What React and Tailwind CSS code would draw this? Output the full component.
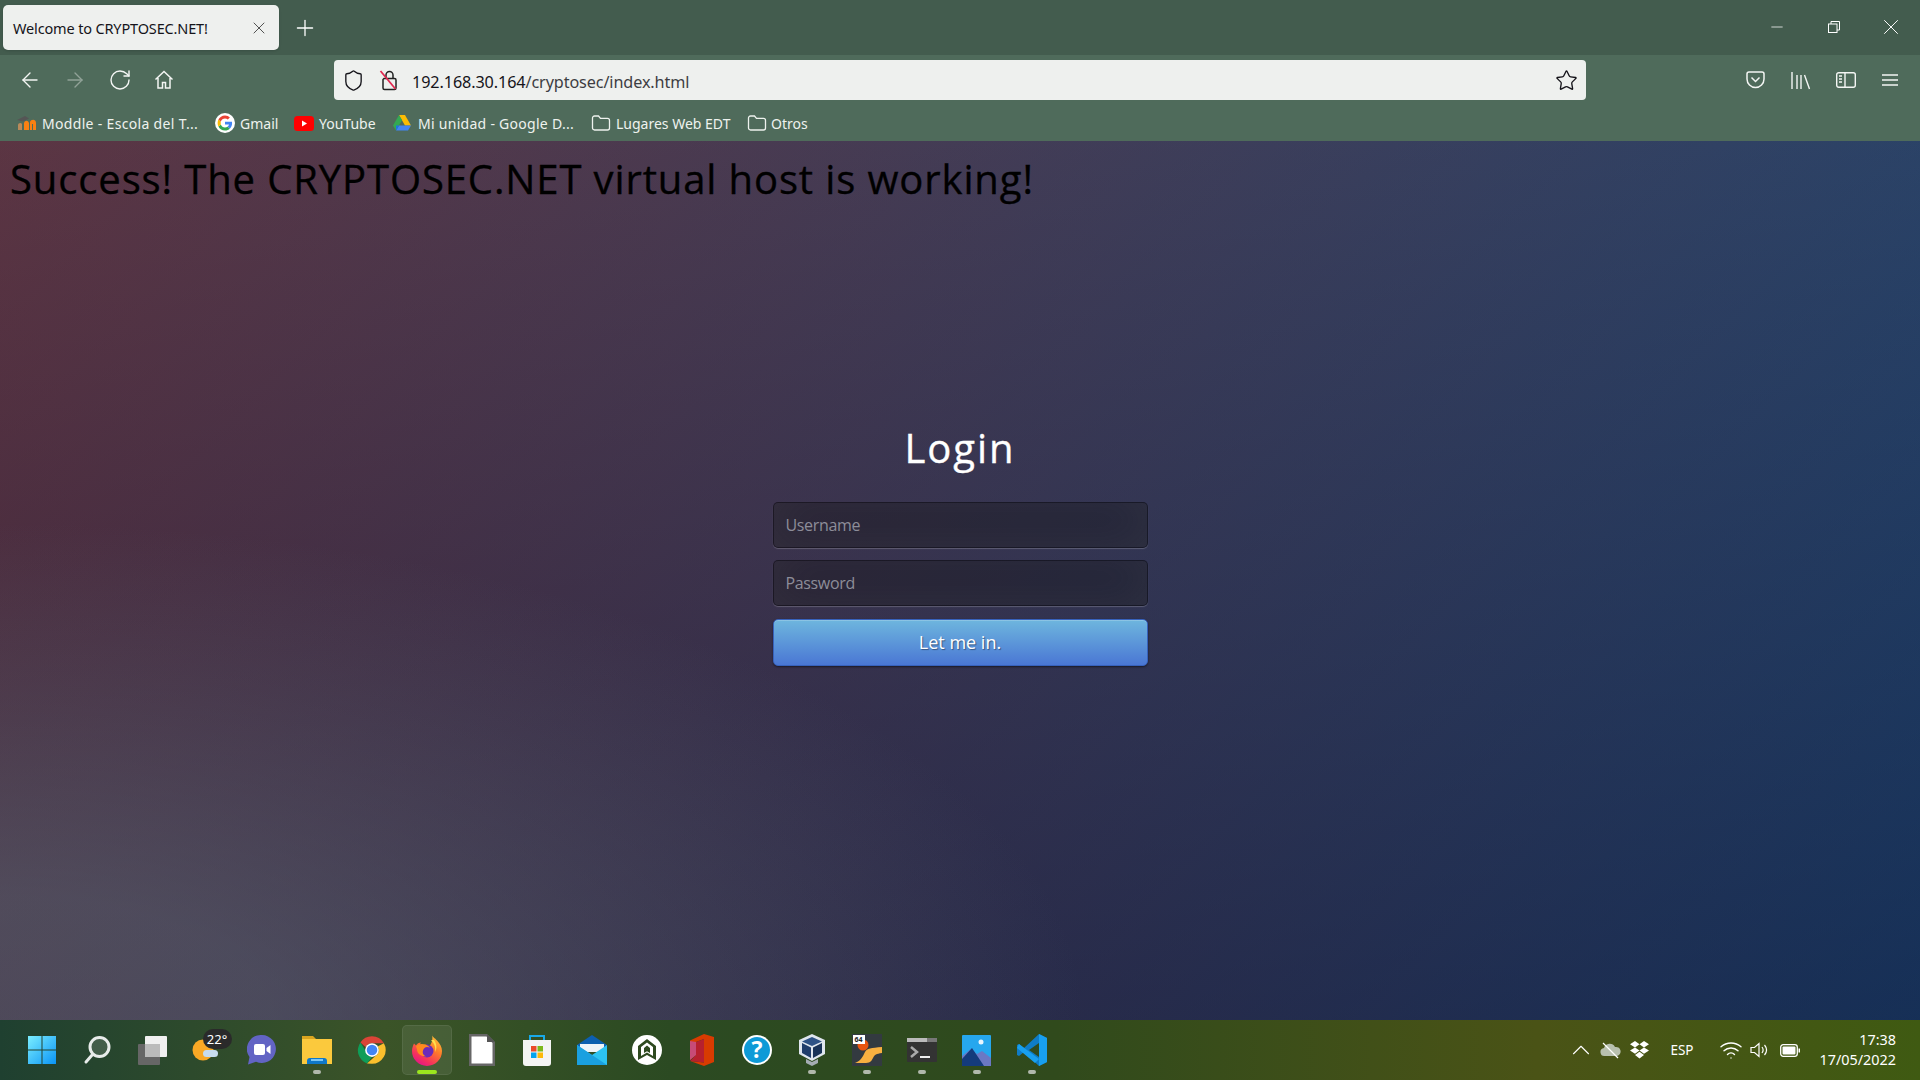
import React from "react";
import { ArrowLeft, ArrowRight, RotateCw, Shield, Star, Plus, X, Minus, ChevronUp, Wifi } from "lucide-react";

const Folder = () => (
  <svg width="20" height="18" viewBox="0 0 20 18" fill="none" stroke="#eef2ee" strokeWidth="1.3"><path d="M1.5 4a2 2 0 0 1 2-2h4l2 2.4h7a2 2 0 0 1 2 2V14a2 2 0 0 1-2 2h-13a2 2 0 0 1-2-2z" /></svg>
);
const Moodle = () => (
  <svg width="22" height="18" viewBox="0 0 22 18"><path d="M1 6l8-4 4 2.500-6 3z" fill="#555" /><path d="M2 16v-5c0-2 3-3 4-1v6z" fill="#b98a5a" /><path d="M8 16V9c1-3 4-3 5 0v7zM14 16V8c1-3 6-3 6 1v7h-3V10h-1v6z" fill="#f98012" /></svg>
);
const GoogleG = () => (
  <svg width="20" height="20" viewBox="0 0 48 48"><circle cx="24" cy="24" r="24" fill="#fff" /><path fill="#4285F4" d="M41 24.500c0-1.300-.1-2.300-.3-3.400H24v6.500h9.600c-.4 2.300-1.700 4.200-3.700 5.500l5.700 4.400c3.400-3.100 5.400-7.600 5.400-13z" /><path fill="#34A853" d="M24 42c4.900 0 8.900-1.600 11.600-4.400l-5.700-4.400c-1.500 1-3.500 1.700-5.900 1.700-4.600 0-8.500-3.100-9.900-7.300l-5.900 4.500C11 37.900 17 42 24 42z" /><path fill="#FBBC05" d="M14.100 27.600c-.7-2.200-.7-5 0-7.200l-5.900-4.600c-2.500 5-2.500 11.400 0 16.400z" /><path fill="#EA4335" d="M24 13.100c2.600 0 4.900.9 6.700 2.600l5-5C32.900 8 28.900 6 24 6 17 6 11 10.100 8.200 15.800l5.900 4.600c1.400-4.200 5.300-7.300 9.900-7.300z" /></svg>
);
const YouTube = () => (
  <svg width="20" height="15" viewBox="0 0 20 15"><rect width="20" height="15" rx="3.500" fill="#f00" /><path d="M8 4.500l5 3-5 3z" fill="#fff" /></svg>
);
const Drive = () => (
  <svg width="18" height="16" viewBox="0 0 18 16"><path d="M6 0h6l6 10.500h-6z" fill="#fbbc04" /><path d="M6 0l3 5.200L3 15.500 0 10.500z" fill="#34a853" /><path d="M3 15.500l3-5h12l-3 5z" fill="#4285f4" /><path d="M3 15.500l3-5H3z" fill="#1a73e8" /></svg>
);

const bookmarks = [
  { icon: <Moodle />, label: "Moddle - Escola del T...", w: "w-[198px]", cls: "gap-[4px] tracking-[0.32px]" },
  { icon: <GoogleG />, label: "Gmail", w: "w-[79px]", cls: "gap-[5px] ml-[1px]" },
  { icon: <YouTube />, label: "YouTube", w: "w-[99px]", cls: "gap-[5px]" },
  { icon: <Drive />, label: "Mi unidad - Google D...", w: "w-[198px]", cls: "gap-[7px] tracking-[0.28px]" },
  { icon: <Folder />, label: "Lugares Web EDT", w: "w-[156px]", cls: "gap-[5px]" },
  { icon: <Folder />, label: "Otros", w: "w-[70px]", cls: "gap-[4px]" },
];

const WinLogo = () => (
  <svg width="30" height="30" viewBox="0 0 30 30"><defs><linearGradient id="w" x1="0" y1="0" x2="1" y2="1"><stop offset="0" stopColor="#7beeff" /><stop offset="1" stopColor="#0a94f5" /></linearGradient></defs><path fill="url(#w)" d="M1 1h13.500v13.500H1zM15.500 1H29v13.500H15.500zM1 15.500h13.500V29H1zM15.500 15.500H29V29H15.500z" /></svg>
);
const Search = () => (
  <svg width="30" height="30" viewBox="0 0 30 30" fill="none"><circle cx="17.500" cy="12" r="9.500" fill="#ffffff22" stroke="#e8ecea" strokeWidth="3" /><path d="M10.500 19.500L4 27" stroke="#e8ecea" strokeWidth="3" strokeLinecap="round" /></svg>
);
const TaskView = () => (
  <svg width="30" height="30" viewBox="0 0 30 30"><rect x="1" y="9" width="22" height="21" rx="1" fill="#666" /><rect x="8" y="1" width="22" height="21" rx="1" fill="#f0f0f0" /><rect x="8" y="9" width="15" height="13" fill="#bbb" /></svg>
);
const Weather = () => (
  <div className="relative w-[30px] h-[30px]">
    <svg width="30" height="30" viewBox="0 0 30 30"><circle cx="11" cy="15" r="10.500" fill="#f9a825" /><rect x="11" y="15" width="15" height="7" rx="3.500" fill="#c7dcef" /></svg>
    <span className="absolute left-[11px] top-[-6px] w-[29px] h-[20px] rounded-full bg-[#2a2a2a] text-white text-[13px] leading-[20px] text-center">22°</span>
  </div>
);
const Teams = () => (
  <svg width="30" height="32" viewBox="0 0 30 32"><path d="M15 1a14 14 0 1 1-6 26.700L1 30.500 2.500 23A14 14 0 0 1 15 1z" fill="#6264c4" /><rect x="7" y="10" width="11" height="11" rx="2" fill="#fff" /><path d="M19.500 14l4-3v9l-4-3z" fill="#fff" /></svg>
);
const Explorer = () => (
  <svg width="32" height="30" viewBox="0 0 32 30"><path d="M1 1h11l3 3h-14z" fill="#d9a520" /><path d="M1 4h30v25H1z" fill="#fbc93d" /><path d="M6 29v-3a3 3 0 0 1 3-3h14a3 3 0 0 1 3 3v3z" fill="#0f78c8" /><rect x="10" y="24" width="12" height="2" fill="#7cc6f5" /></svg>
);
const Chrome = () => (
  <svg width="30" height="30" viewBox="0 0 48 48"><path fill="#db4437" d="M24 2a22 22 0 0 1 19 11H24a11 11 0 0 0-10 6.500L5.500 12A22 22 0 0 1 24 2z" /><path fill="#0f9d58" d="M5.500 12L14 26a11 11 0 0 0 10 9l-8 10.500A22 22 0 0 1 5.500 12z" /><path fill="#fbc02d" d="M43 13a22 22 0 0 1-19 33l-8-.5 17-15a11 11 0 0 0 0-12z" /><circle cx="24" cy="24" r="11" fill="#fff" /><circle cx="24" cy="24" r="8.500" fill="#4285f4" /></svg>
);
const Firefox = () => (
  <svg width="30" height="32" viewBox="0 0 30 32"><defs><linearGradient id="f" x1="0.900" y1="0" x2="0.300" y2="1"><stop offset="0" stopColor="#ffd43a" /><stop offset="0.450" stopColor="#ff7a2a" /><stop offset="0.800" stopColor="#f5305e" /><stop offset="1" stopColor="#e31587" /></linearGradient></defs><path d="M20 0c0 3 3 4 5 6.500 3 3 5 7 5 10.500a15 15 0 0 1-30 0c0-3 1-5.500 2-7.500l2 2c1-2 3-3 5-3-1 1-1 2 0 3 3-1 6-1 8 1 3-3 4-8 3-12.500z" fill="url(#f)" /><circle cx="15" cy="17" r="6.500" fill="#6b2bb8" /><path d="M4 12c3-3 10-3 14 1.500-4-1.500-6 0-7 3-1 3 1 5 3 6-5 0-9-3-9-7z" fill="#ff8a1e" /><path d="M19 6c3 3 5 7 4 12 2-3 2-8-1-12z" fill="#ffe14d" /></svg>
);
const Libre = () => (
  <svg width="26" height="32" viewBox="0 0 26 32"><path d="M0 0h18l8 8v24H0z" fill="#666" /><path d="M2.500 2.500h15L23.500 9v20.500h-21z" fill="#fff" /><path d="M18 0l8 8h-8z" fill="#555" /></svg>
);
const Store = () => (
  <svg width="30" height="32" viewBox="0 0 30 32"><path d="M8 7V2h14v5" fill="none" stroke="#18a9e8" strokeWidth="2" /><path d="M1 6h28v23a3 3 0 0 1-3 3H4a3 3 0 0 1-3-3z" fill="#f4f4f4" /><rect x="9" y="12" width="5.500" height="5.500" fill="#ea4a2a" /><rect x="15.500" y="12" width="5.500" height="5.500" fill="#7cb81c" /><rect x="9" y="18.500" width="5.500" height="5.500" fill="#06a4ef" /><rect x="15.500" y="18.500" width="5.500" height="5.500" fill="#fdb90a" /></svg>
);
const Mail = () => (
  <svg width="30" height="30" viewBox="0 0 30 30"><path d="M0 10L15 0l15 10v2H0z" fill="#0c5fb0" /><path d="M3 9h24v8H3z" fill="#eef3f8" /><path d="M0 10l15 10 15-10v20H0z" fill="#2cc3f2" /><path d="M0 30V10l30 20z" fill="#1aa0e0" /></svg>
);
const Circle = () => (
  <svg width="30" height="32" viewBox="0 0 30 32"><circle cx="15" cy="16" r="15" fill="#fff" /><path d="M15 5l9 7v14l-9-5-9 5V12z" fill="#2e4a1f" /><path d="M15 8.500l6 4.500v9l-6-3.500-6 3.500v-9z" fill="#fff" /><path d="M15 11.500l3 2.500v5l-3-1.700-3 1.700v-5z" fill="#2e4a1f" /></svg>
);
const Office = () => (
  <svg width="24" height="32" viewBox="0 0 24 32"><path d="M14 0l10 3v25l-10 4-14-5 14 1.500V5L6 8v13l-6 5V6.500z" fill="#d83b01" /><path d="M6 8l8-3v23.500L0 27l6-6z" fill="#b7202e" /><path d="M0 7l6 1v13l-6 5z" fill="#c74b77" /></svg>
);
const Help = () => (
  <svg width="30" height="32" viewBox="0 0 30 32"><circle cx="15" cy="16" r="15" fill="#fff" /><circle cx="15" cy="16" r="13" fill="#0e9ad7" /><text x="15" y="24" textAnchor="middle" fontSize="23" fontWeight="700" fontFamily="Open Sans, sans-serif" fill="#fff">?</text></svg>
);
const VBox = () => (
  <svg width="26" height="32" viewBox="0 0 26 32"><path d="M13 0l13 6v14l-13 7L0 20V6z" fill="#dfe6ee" /><path d="M13 3L23 7.500 13 12 3 7.500z" fill="#2d5286" /><path d="M3 9l9 4.500V24l-9-5z" fill="#1f3d6b" /><path d="M14 13.500L23 9v10l-9 5z" fill="#183258" /><path d="M7 25l6 3 6-3v4l-6 3-6-3z" fill="#a4acb4" /></svg>
);
const Cygwin = () => (
  <div className="relative w-[30px] h-[32px] bg-[#333a40]">
    <svg width="30" height="32" viewBox="0 0 30 32"><circle cx="11" cy="11" r="5.500" fill="#e8550f" /><path d="M3 29c6-2 8-7 10-11s6-4 17-5v6c-6 1-7 1-9 5s-3 5-9 5z" fill="#f8b040" /></svg>
    <span className="absolute left-[1px] top-[1px] w-[12px] h-[9px] bg-white text-[#222] text-[7px] font-bold leading-[9px] text-center">64</span>
  </div>
);
const Terminal = () => (
  <svg width="30" height="24" viewBox="0 0 30 24"><rect width="30" height="24" rx="1" fill="#333" /><rect width="30" height="4" fill="#bbb" /><rect x="20" width="10" height="4" fill="#777" /><path d="M4 9l6 5-6 5" fill="none" stroke="#aaa" strokeWidth="2.500" /><rect x="13" y="18" width="10" height="2" fill="#eee" /></svg>
);
const Photos = () => (
  <svg width="29" height="31" viewBox="0 0 29 31"><rect width="29" height="31" rx="1" fill="#26a7ee" /><circle cx="19" cy="7" r="2.500" fill="#e9f6ff" /><path d="M0 31V21l9-7 6 5 5-3 9 7v8z" fill="#6b78c4" /><path d="M0 31V24L10 13l12 18z" fill="#143b7c" /></svg>
);
const VSCode = () => (
  <svg width="30" height="32" viewBox="0 0 30 32"><path d="M22 0l8 4v24l-8 4L7 18l-5 4-2-1v-10l2-1 5 4z" fill="#0f7cc6" /><path d="M22 0l8 4v24l-8 4zM2 10l20 15-4 4L0 14z" fill="#18a0ef" /><path d="M22 9l-10 7 10 7z" fill="#2e4a1f" /></svg>
);

const taskItems = [
  { el: <WinLogo /> },
  { el: <Search /> },
  { el: <TaskView /> },
  { el: <Weather /> },
  { el: <Teams /> },
  { el: <Explorer />, dot: true },
  { el: <Chrome /> },
  { el: <Firefox />, active: true },
  { el: <Libre /> },
  { el: <Store /> },
  { el: <Mail /> },
  { el: <Circle /> },
  { el: <Office /> },
  { el: <Help /> },
  { el: <VBox />, dot: true },
  { el: <Cygwin />, dot: true },
  { el: <Terminal />, dot: true },
  { el: <Photos />, dot: true },
  { el: <VSCode />, dot: true },
];

const inputCls =
  "w-[375px] h-[46px] px-[12px] rounded-[5px] bg-[#00000050] border border-[#0000004d] text-[16px] tracking-[-0.35px] text-white placeholder:text-[#8d8d99] shadow-[inset_0_-5px_45px_rgba(100,100,100,.2),0_1px_1px_rgba(255,255,255,.2)] outline-none";

export default function App() {
  return (
    <div className="w-[1920px] h-[1080px] overflow-hidden flex flex-col font-['Open_Sans',sans-serif]">
      {/* Tab strip */}
      <div className="h-[55px] bg-[#435c4e] flex items-start shrink-0 text-white">
        <div className="ml-[3px] mt-[5px] w-[276px] h-[45px] rounded-[5px] bg-[#eef0ee] flex items-center justify-between pl-[10px] pr-[10px] shadow-sm text-[#15141a]">
          <span className="pt-[2px] text-[14.500px] font-['Noto_Sans',sans-serif] tracking-[-0.15px]">Welcome to CRYPTOSEC.NET!</span>
          <X size={20} strokeWidth={1} color="#333" />
        </div>
        <div className="ml-[13px] mt-[15px]"><Plus size={26} strokeWidth={1.200} /></div>
        <div className="ml-auto flex items-center h-[54px]">
          <div className="w-[57px] flex justify-center"><Minus size={18} strokeWidth={1} /></div>
          <div className="w-[57px] flex justify-center">
            <svg width="12" height="12" viewBox="0 0 12 12" fill="none" stroke="#fff"><rect x="0.500" y="3" width="8.500" height="8.500" /><path d="M3 3V.500h8.500V9H9" /></svg>
          </div>
          <div className="w-[57px] mr-[1px] flex justify-center"><X size={26} strokeWidth={0.900} /></div>
        </div>
      </div>

      {/* Toolbar */}
      <div className="h-[50px] bg-[#4f6b5b] flex items-center shrink-0 text-[#f4f6f4]">
        <div className="ml-[18px] w-[45px]"><ArrowLeft size={24} strokeWidth={1.400} /></div>
        <div className="w-[45px] opacity-40"><ArrowRight size={24} strokeWidth={1.400} /></div>
        <div className="w-[46px]"><RotateCw size={24} strokeWidth={1.400} /></div>
        <div className="w-[180px]">
          <svg width="20" height="20" viewBox="0 0 20 20" fill="none" stroke="currentColor" strokeWidth="1.500"><path d="M1.500 9.500L10 1.500l8.500 8M4 8v10h4.500v-5.500h3V18H16V8" /></svg>
        </div>
        <div className="w-[1252px] h-[40px] rounded-[4px] bg-[#eef0ee] flex items-center text-[#15141a]">
          <div className="ml-[8px] w-[37px]"><Shield size={23} strokeWidth={1.400} /></div>
          <div className="w-[33px]">
            <svg width="20" height="22" viewBox="0 0 20 22" fill="none"><path d="M5 9.500h10.500a1.500 1.500 0 0 1 1.500 1.500v8a1.500 1.500 0 0 1-1.500 1.500h-10A1.500 1.500 0 0 1 4 19v-8.500zM7 9V6a3.500 3.500 0 0 1 7 0v3" stroke="#222" strokeWidth="1.500" /><path d="M1.500 2l15 18" stroke="#e22850" strokeWidth="1.800" /></svg>
          </div>
          <span className="pt-[4px] text-[16.200px] font-['Noto_Sans',sans-serif] tracking-[-0.1px]">192.168.30.164<span className="text-[#3d3d42]">/cryptosec/index.html</span></span>
          <div className="ml-auto mr-[8px]"><Star size={23} strokeWidth={1.400} /></div>
        </div>
        <div className="ml-[160px] w-[45px]">
          <svg width="19" height="18" viewBox="0 0 19 18" fill="none" stroke="currentColor" strokeWidth="1.500"><path d="M1 3a2 2 0 0 1 2-2h13a2 2 0 0 1 2 2v5a8.500 8.500 0 0 1-17 0z" /><path d="M5.500 6.500l4 4 4-4" /></svg>
        </div>
        <div className="w-[45px]">
          <svg width="20" height="19" viewBox="0 0 20 19" fill="none" stroke="currentColor" strokeWidth="1.400"><path d="M1 1v17M6 4v14M10 4v14M13.500 4l5 14" /></svg>
        </div>
        <div className="w-[46px]">
          <svg width="20" height="16" viewBox="0 0 20 16" fill="none" stroke="currentColor" strokeWidth="1.400"><rect x="0.700" y="0.700" width="18.600" height="14.600" rx="2" /><path d="M9 1v14M3 4h3M3 7h3M3 10h3" /></svg>
        </div>
        <div>
          <svg width="16" height="14" viewBox="0 0 16 14" fill="none" stroke="currentColor" strokeWidth="1.300"><path d="M0 2h16M0 7h16M0 12h16" /></svg>
        </div>
      </div>

      {/* Bookmarks */}
      <div className="h-[36px] bg-[#4f6b5b] flex items-center shrink-0 pl-[16px] text-[#eef2ee] text-[14px] font-['Noto_Sans',sans-serif]">
        {bookmarks.map((b) => (
          <div key={b.label} className={`flex items-center ${b.w} ${b.cls}`}>
            {b.icon}
            <span className="whitespace-nowrap">{b.label}</span>
          </div>
        ))}
      </div>

      {/* Page */}
      <main className="flex-1 min-h-0 flex flex-col items-center bg-[radial-gradient(ellipse_farthest-corner_at_0%_100%,rgba(104,128,138,.4)_10%,rgba(138,114,76,0)_40%),linear-gradient(to_bottom,rgba(57,173,219,.25)_0%,rgba(42,60,87,.4)_100%),linear-gradient(135deg,#670d10_0%,#092756_100%)]">
        <h1 className="self-start ml-[10px] mt-[11px] text-[40px] leading-[54px] font-normal text-[#000] tracking-[0.88px] whitespace-nowrap [-webkit-text-stroke:0.35px_#000]">Success! The CRYPTOSEC.NET virtual host is working!</h1>
        <h2 className="mt-[215px] text-[40px] leading-[54px] text-white font-normal tracking-[1.900px] [-webkit-text-stroke:0.35px_#fff]">Login</h2>
        <input readOnly placeholder="Username" className={`mt-[27px] ${inputCls}`} />
        <input readOnly placeholder="Password" className={`mt-[12px] ${inputCls}`} />
        <button className="mt-[13px] w-[375px] h-[47px] rounded-[5px] border border-[#3762bc] bg-[linear-gradient(to_bottom,#6eb6de,#4a77d4)] text-white text-[18px] [text-shadow:1px_1px_1px_rgba(0,0,0,.4)] shadow-[inset_0_1px_0_rgba(255,255,255,.2),0_1px_2px_rgba(0,0,0,.5)]">Let me in.</button>
      </main>

      {/* Taskbar */}
      <footer className="h-[60px] shrink-0 flex items-center bg-[linear-gradient(90deg,#1f4030_0%,#3b5428_20%,#2b4a22_35%,#304a1c_55%,#4a5316_80%,#3f5a12_100%)] text-white font-['Noto_Sans',sans-serif]">
        <div className="ml-[14px] flex">
          {taskItems.map((t, i) => (
            <div key={i} className="relative w-[55px] h-[50px] flex items-center justify-center">
              {t.active && <span className="absolute left-[3px] top-0 w-[50px] h-[50px] rounded-[5px] bg-[#ffffff14] border border-[#ffffff12]" />}
              <div className="relative">{t.el}</div>
              {t.dot && <span className="absolute left-[24px] bottom-[1px] w-[8px] h-[4px] rounded-full bg-[#b0b8ac]" />}
              {t.active && <span className="absolute left-[18px] bottom-[1px] w-[20px] h-[4px] rounded-full bg-[#9be61e]" />}
            </div>
          ))}
        </div>
        <div className="ml-auto flex items-center h-full">
          <ChevronUp size={30} strokeWidth={0.900} />
          <svg className="ml-[4px]" width="21" height="17" viewBox="0 0 21 17"><path d="M5 14a4 4 0 0 1-1-8 6 6 0 0 1 11-1 4.500 4.500 0 0 1 2 9z" fill="#b8c0ae" /><path d="M3 1l15 15" stroke="#fff" strokeWidth="1.200" /></svg>
          <svg className="ml-[9px]" width="19" height="18" viewBox="0 0 19 18" fill="#fff"><path d="M5 0L0 3.200l5 3.200 4.500-3.200zM14 0L9.500 3.200 14 6.400l5-3.200zM0 9.600l5 3.200 4.500-3.200L5 6.400zM14 6.400L9.500 9.600l4.500 3.200 5-3.200zM5 14l4.500 3.500L14 14l-4.500-3.200z" /></svg>
          <span className="ml-[21px] w-[25px] text-[13.500px]">ESP</span>
          <Wifi className="ml-[24px]" size={24} strokeWidth={1.400} />
          <svg className="ml-[7px]" width="20" height="18" viewBox="0 0 20 18" fill="none" stroke="#fff" strokeWidth="1.200"><path d="M1 6.500h3.500L9 2.500v13l-4.500-4H1z" /><path d="M12 6c1.500 2 1.500 4 0 6M14.500 4c2.500 3 2.500 7 0 10" /></svg>
          <svg className="ml-[10px]" width="20" height="13" viewBox="0 0 20 13" fill="none"><rect x="0.700" y="0.700" width="16.600" height="11.600" rx="2.500" stroke="#fff" strokeWidth="1.300" /><rect x="2.500" y="2.500" width="13" height="8" rx="1" fill="#fff" /><rect x="18.500" y="4.500" width="1.500" height="4" fill="#fff" /></svg>
          <div className="ml-[19px] mr-[24px] flex flex-col items-end text-[14.400px] leading-[20px] pb-[1px]">
            <span>17:38</span>
            <span>17/05/2022</span>
          </div>
        </div>
      </footer>
    </div>
  );
}
